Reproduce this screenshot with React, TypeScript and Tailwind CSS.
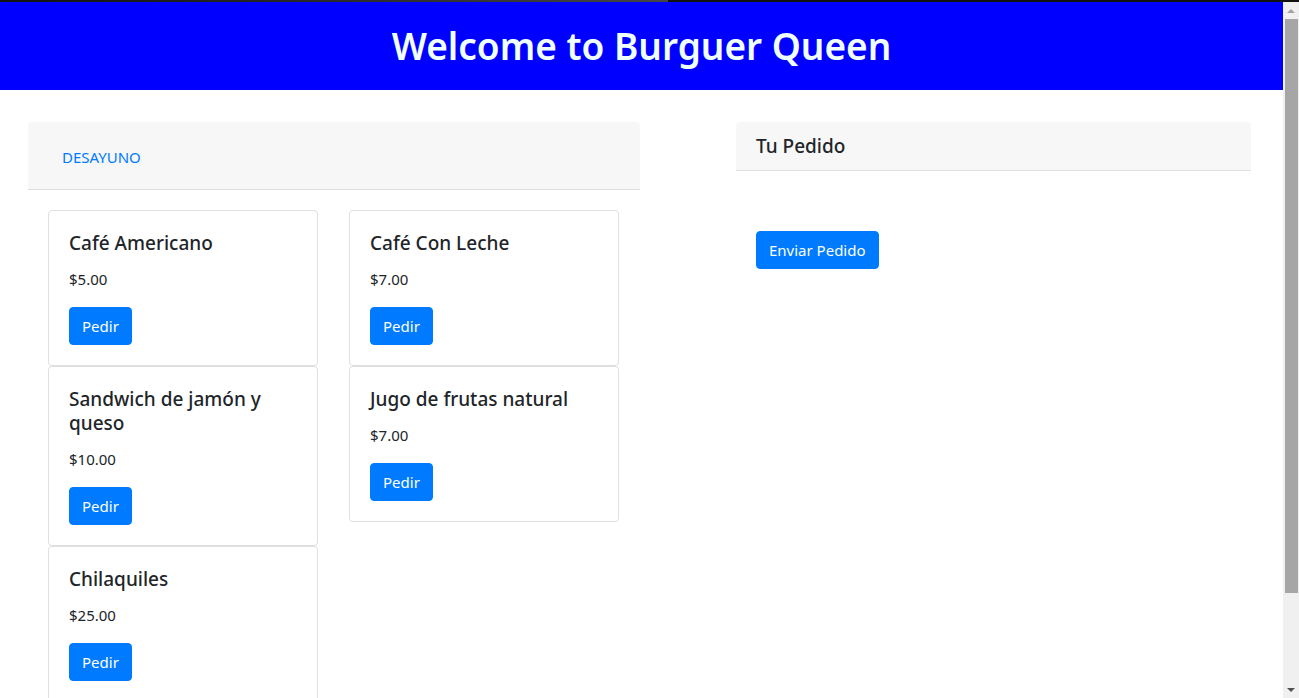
const desayuno = [
  [
    { name: 'Café Americano', price: '$5.00' },
    { name: 'Sandwich de jamón y queso', price: '$10.00' },
    { name: 'Chilaquiles', price: '$25.00' },
  ],
  [
    { name: 'Café Con Leche', price: '$7.00' },
    { name: 'Jugo de frutas natural', price: '$7.00' },
  ],
];

function ProductCard({ name, price }: { name: string; price: string }) {
  return (
    <div className="border border-[#dfdfdf] rounded bg-white">
      <div className="p-5">
        <h5 className="text-[19px] font-medium leading-6 text-[#212529] mb-3">{name}</h5>
        <p className="text-[15px] leading-6 text-[#212529] mb-4">{price}</p>
        <button className="bg-[#007bff] border border-[#007bff] text-white text-[15px] leading-6 px-3 py-1.5 rounded">
          Pedir
        </button>
      </div>
    </div>
  );
}

function Scrollbar() {
  return (
    <div className="w-4 shrink-0 bg-[#f0f0f0] flex flex-col items-center">
      <div className="mt-[7px] w-0 h-0 border-x-4 border-x-transparent border-b-4 border-b-[#a3a3a3]"></div>
      <div className="mt-[6px] w-[13px] h-[574px] bg-[#a6a6a6]"></div>
      <div className="flex-1"></div>
      <div className="mb-[6px] w-0 h-0 border-x-4 border-x-transparent border-t-4 border-t-[#505050]"></div>
    </div>
  );
}

export default function App() {
  return (
    <div className="h-[698px] w-full flex flex-col overflow-hidden bg-white font-['Noto_Sans','Open_Sans',sans-serif]">
      <div className="h-[2px] w-full flex shrink-0">
        <div className="w-[668px] bg-gradient-to-r from-[#111] to-[#444]"></div>
        <div className="flex-1 bg-[#111]"></div>
      </div>
      <div className="flex flex-1 min-h-0">
        <div className="flex-1 min-w-0">
          <header className="h-[88px] bg-[#0000ff] flex items-center justify-center">
            <h1 className="text-[37px] font-semibold leading-[48px] text-[#f0ffff]">Welcome to Burguer Queen</h1>
          </header>

          <div className="flex pt-8 pl-7 pr-8 gap-24">
            <section className="w-[612px] shrink-0">
              <div className="h-[68px] bg-[#f7f7f7] border-b border-[#dfdfdf] rounded-t flex items-center pl-[34px] pt-1">
                <span className="text-[15px] text-[#007bff] uppercase">Desayuno</span>
              </div>
              <div className="flex gap-[31px] pt-5 pl-5">
                {desayuno.map((col, i) => (
                  <div key={i} className="w-[270px] flex flex-col">
                    {col.map((p) => (
                      <ProductCard key={p.name} name={p.name} price={p.price} />
                    ))}
                  </div>
                ))}
              </div>
            </section>

            <section className="flex-1">
              <div className="bg-[#f7f7f7] border-b border-[#dfdfdf] rounded-t px-5 py-3">
                <h5 className="text-[19px] font-medium leading-6 text-[#212529]">Tu Pedido</h5>
              </div>
              <div className="p-5 pt-[60px]">
                <button className="bg-[#007bff] border border-[#007bff] text-white text-[15px] leading-6 px-3 py-1.5 rounded">
                  Enviar Pedido
                </button>
              </div>
            </section>
          </div>
        </div>
        <Scrollbar />
      </div>
    </div>
  );
}
